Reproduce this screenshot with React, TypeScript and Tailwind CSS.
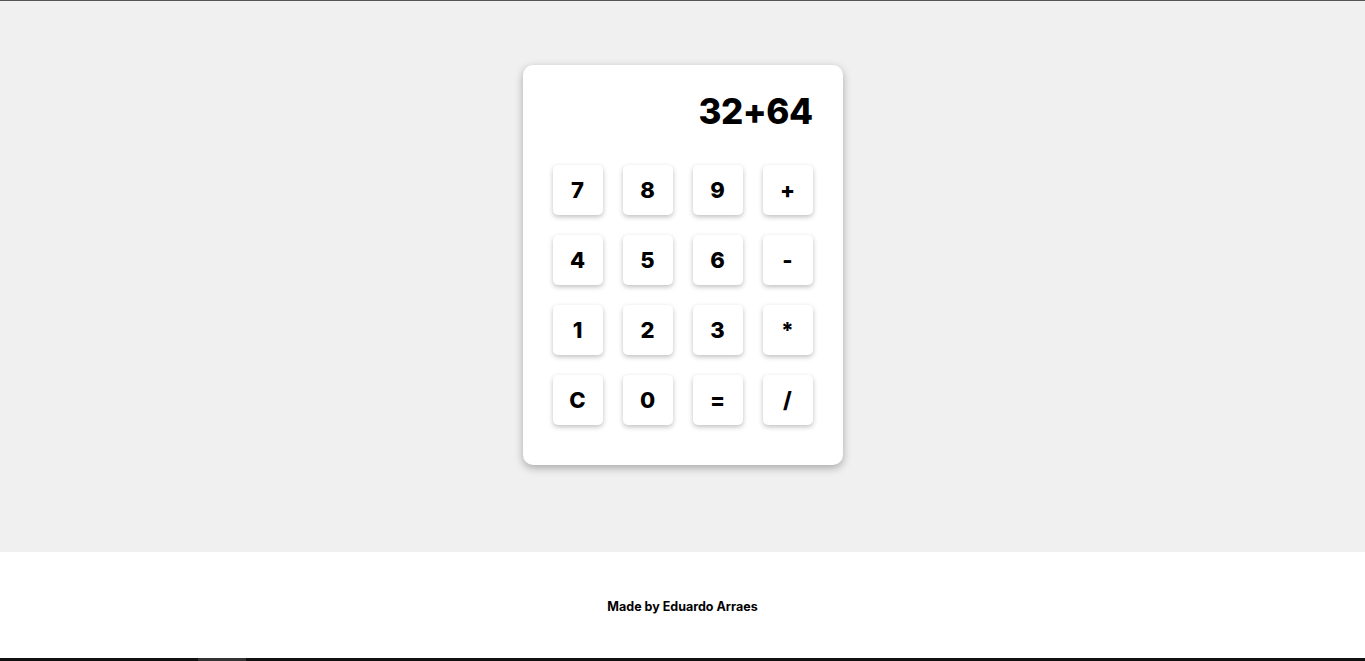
const keys = ["7", "8", "9", "+", "4", "5", "6", "-", "1", "2", "3", "*", "C", "0", "=", "/"]

export default function App() {
  return (
    <div className="flex h-[661px] flex-col font-['Inter','Lato',sans-serif] text-black">
      {/* top line */}
      <div className="h-px bg-[#555555]" />

      {/* calculator area */}
      <main className="flex h-[551px] justify-center bg-[#f0f0f0] pt-16">
        <div className="h-[400px] w-[320px] rounded-[10px] bg-white px-[30px] pt-[24px] shadow-[0_3px_8px_rgba(0,0,0,0.3)]">
          <div className="h-[76px] text-right text-[35px] font-extrabold leading-[44px] tracking-[-0.5px]">
            32+64
          </div>
          <div className="grid grid-cols-4 gap-5">
            {keys.map((k) => (
              <button
                key={k}
                className="flex h-[50px] w-[50px] items-center justify-center rounded-[5px] bg-white text-[22px] font-extrabold shadow-[0_2px_5px_rgba(0,0,0,0.25)]"
              >
                {k}
              </button>
            ))}
          </div>
        </div>
      </main>

      {/* footer */}
      <footer className="flex h-[106px] items-center justify-center bg-white pt-1 text-[12.5px] font-bold">
        Made by Eduardo Arraes
      </footer>

      {/* bottom bar */}
      <div className="flex h-[3px] bg-[#111111]">
        <div className="ml-[198px] w-[48px] bg-[#333333]" />
      </div>
    </div>
  )
}
